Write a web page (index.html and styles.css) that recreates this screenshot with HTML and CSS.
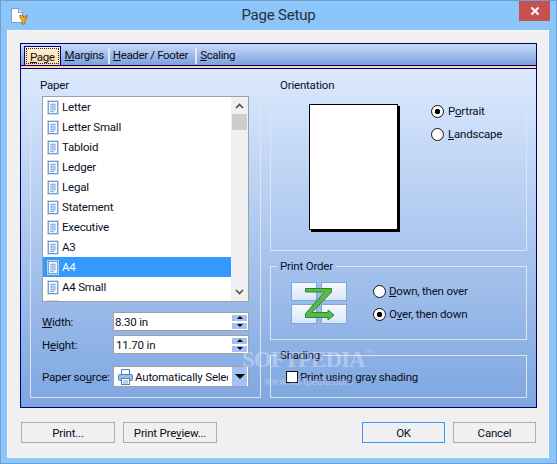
FILE: index.html
```html
<!DOCTYPE html>
<html lang="en">
<head>
  <meta charset="UTF-8" />
  <title>Page Setup</title>
  <link rel="stylesheet" href="styles.css">
</head>
<body>
<svg class="defs" width="0" height="0">
  <symbol id="doc" viewBox="0 0 13 16">
    <rect x="0.5" y="0.5" width="12" height="15" fill="#e6eefa" stroke="#cfd8e6"/>
    <rect x="1.5" y="1.5" width="10" height="13" fill="#fbfdff" stroke="#5f94d2"/>
    <path d="M3.5 4.5h6M3.5 6.5h6M3.5 8.5h6M3.5 10.5h6M3.5 12.5h4" stroke="#5f94d2" fill="none"/>
  </symbol>
</svg>
<div class="window">
  <header class="titlebar">
    <svg class="app-icon" width="18" height="18" viewBox="0 0 18 18">
      <path d="M1.5 1.5h7l4 4v10h-11z" fill="#fff" stroke="#6f9fd6"/>
      <path d="M8.5 1.5v4h4" fill="#dfeafa" stroke="#6f9fd6"/>
      <path d="M10 8v3l2 2v4h3v-4l2-2V8l-1.5 1v1.500h-2V9z" fill="#f2b01e" stroke="#a3620a" stroke-width="0.8"/>
    </svg>
    <h1 class="title">Page Setup</h1>
    <button class="close-btn">
      <svg width="10" height="10" viewBox="0 0 10 10"><path d="M1.500 1.500l7 7M8.500 1.500l-7 7" stroke="#fff" stroke-width="2"/></svg>
    </button>
  </header>

  <div class="client">
    <div class="tabs">
      <div class="tab-strip">
        <div class="tab active"><span class="focus"><u>P</u>age</span></div>
        <div class="tab margins-tab"><u>M</u>argins</div>
        <div class="tab-sep"></div>
        <div class="tab header-tab"><u>H</u>eader / Footer</div>
        <div class="tab-sep"></div>
        <div class="tab"><u>S</u>caling</div>
      </div>
      <div class="tab-line"></div>

      <div class="panel">
        <fieldset class="group paper-group">
          <legend>Paper</legend>
          <ul class="paper-list">
            <li><svg class="doc-icon"><use href="#doc"/></svg>Letter</li>
            <li><svg class="doc-icon"><use href="#doc"/></svg>Letter Small</li>
            <li><svg class="doc-icon"><use href="#doc"/></svg>Tabloid</li>
            <li><svg class="doc-icon"><use href="#doc"/></svg>Ledger</li>
            <li><svg class="doc-icon"><use href="#doc"/></svg>Legal</li>
            <li><svg class="doc-icon"><use href="#doc"/></svg>Statement</li>
            <li><svg class="doc-icon"><use href="#doc"/></svg>Executive</li>
            <li><svg class="doc-icon"><use href="#doc"/></svg>A3</li>
            <li class="selected"><svg class="doc-icon"><use href="#doc"/></svg>A4</li>
            <li><svg class="doc-icon"><use href="#doc"/></svg>A4 Small</li>
            <li class="clipped-row"><svg class="doc-icon"><use href="#doc"/></svg></li>
          </ul>
          <div class="scrollbar">
            <svg class="chevron" width="9" height="6" viewBox="0 0 9 6"><path d="M1 5l3.500-3.500L8 5" fill="none" stroke="#505050" stroke-width="1.600"/></svg>
            <div class="thumb"></div>
            <svg class="chevron chevron-down" width="9" height="6" viewBox="0 0 9 6"><path d="M1 1l3.500 3.500L8 1" fill="none" stroke="#505050" stroke-width="1.600"/></svg>
          </div>

          <div class="form-row first-row">
            <label><u>W</u>idth:</label>
            <div class="field">
              <span class="field-text">8.30 in</span>
              <div class="spin"><span class="up"></span><span class="down"></span></div>
            </div>
          </div>
          <div class="form-row">
            <label>H<u>e</u>ight:</label>
            <div class="field">
              <span class="field-text shifted">11.70 in</span>
              <div class="spin"><span class="up"></span><span class="down"></span></div>
            </div>
          </div>
          <div class="form-row source-row">
            <label>Paper so<u>u</u>rce:</label>
            <div class="field combo">
              <svg class="printer" width="15" height="16" viewBox="0 0 15 16">
                <path d="M3.500 6V.5h8V6" fill="#fff" stroke="#4f82bd"/>
                <rect x="0.500" y="5.500" width="14" height="6" rx="1" fill="#9dbce6" stroke="#4f82bd"/>
                <rect x="3.500" y="9.500" width="8" height="6" fill="#fff" stroke="#4f82bd"/>
                <path d="M5 12h5M5 14h5" stroke="#7fa3d4"/>
              </svg>
              <span class="combo-text">Automatically Select</span>
              <div class="combo-btn"><span></span></div>
            </div>
          </div>
        </fieldset>

        <div class="right-col">
          <fieldset class="group orientation-group">
            <legend>Orientation</legend>
            <div class="orientation-body">
              <div class="sheet"></div>
              <div class="radios">
                <label class="radio-row"><input type="radio" name="orient" checked><span>P<u>o</u>rtrait</span></label>
                <label class="radio-row"><input type="radio" name="orient"><span><u>L</u>andscape</span></label>
              </div>
            </div>
          </fieldset>

          <fieldset class="group order-group">
            <legend>Print Order</legend>
            <div class="order-body">
              <svg class="order-icon" width="56" height="44" viewBox="0 0 56 44">
                <defs>
                  <linearGradient id="tile" x1="0" y1="0" x2="0" y2="1">
                    <stop offset="0" stop-color="#f6f9ff"/>
                    <stop offset="1" stop-color="#d8e6f9"/>
                  </linearGradient>
                </defs>
                <rect x="0.500" y="1.500" width="25" height="18" fill="url(#tile)" stroke="#7da7da"/>
                <rect x="30.500" y="1.500" width="25" height="18" fill="url(#tile)" stroke="#7da7da"/>
                <rect x="0.500" y="23.500" width="25" height="19" fill="url(#tile)" stroke="#7da7da"/>
                <rect x="30.500" y="23.500" width="25" height="19" fill="url(#tile)" stroke="#7da7da"/>
                <path d="M14.500 7.500h26v3.500L21 31.500h16v-2.500l6 5-6 5v-2.500H14.500v-4L33.500 11H14.500z" fill="#58b84a" stroke="#2b8a2b"/>
              </svg>
              <div class="radios order-radios">
                <label class="radio-row"><input type="radio" name="order"><span><u>D</u>own, then over</span></label>
                <label class="radio-row"><input type="radio" name="order" checked><span>O<u>v</u>er, then down</span></label>
              </div>
            </div>
          </fieldset>

          <fieldset class="group shading-group">
            <legend>Shading</legend>
            <label class="check-row"><input type="checkbox"><span>Print using <u>g</u>ray shading</span></label>
          </fieldset>
        </div>
      </div>
    </div>

    <div class="buttons">
      <button class="btn">Print...</button>
      <button class="btn preview-btn">Print Pre<u>v</u>iew...</button>
      <button class="btn ok-btn default">OK</button>
      <button class="btn">Cancel</button>
    </div>
  </div>

  <div class="watermark">
    <span class="wm-name">SOFTPEDIA</span>
    <span class="wm-tm">TM</span>
    <span class="wm-url">www.softpedia.com</span>
  </div>
</div>
</body>
</html>
```

FILE: styles.css
```css
* {
  box-sizing: border-box;
}

body {
  margin: 0;
  font-family: Roboto, sans-serif;
  font-size: 11.5px;
  letter-spacing: -0.2px;
  color: #0a0f24;
}

.defs {
  position: absolute;
}

u {
  text-underline-offset: 1px;
}

.window {
  position: relative;
  width: 557px;
  height: 464px;
  background: #8bc5fa;
  border: 1px solid #6a9fd0;
  display: flex;
  flex-direction: column;
}

.titlebar {
  height: 29px;
  flex: none;
  display: grid;
  grid-template-columns: 1fr auto 1fr;
}

.app-icon {
  margin: 6px 0 0 9px;
}

.title {
  margin: 3px 0 0;
  font-size: 15px;
  font-weight: 400;
  line-height: 22px;
  color: #27313d;
}

.close-btn {
  justify-self: end;
  width: 31px;
  height: 20px;
  margin-right: 6px;
  padding: 0;
  border: none;
  background: #c75050;
  display: flex;
  align-items: center;
  justify-content: center;
}

.client {
  flex: 1;
  margin: 0 7px 6px 6px;
  padding: 12px 11px 14px 12px;
  background: #f0f0f0;
  border: 1px solid #f7f7f7;
  display: flex;
  flex-direction: column;
}

.tabs {
  border: 1px solid #00007f;
  flex: 1;
  display: flex;
  flex-direction: column;
  min-height: 0;
}

.tab-strip {
  height: 22px;
  flex: none;
  padding: 2px 0 0 3px;
  background: linear-gradient(#c9dcf8, #7c9fdc);
  border-bottom: 1px solid #00007f;
  display: flex;
  align-items: stretch;
  letter-spacing: -0.35px;
}

.tab {
  padding: 0 4px 0 3px;
  line-height: 19px;
  white-space: nowrap;
}

.margins-tab {
  padding-right: 2px;
}

.header-tab {
  padding-right: 5px;
}

.tab.active {
  padding: 1px;
  margin-right: 1px;
  border: 1px solid #00007f;
  border-bottom: none;
  background: linear-gradient(#fff1d4, #ffd9a0);
}

.focus {
  display: block;
  height: 100%;
  padding: 0 3px;
  line-height: 16px;
  border: 1px dotted #222;
}

.tab-sep {
  width: 2px;
  margin: 2px 0 1px 2px;
  background: #dfe9fa;
}

.tab-line {
  height: 3px;
  flex: none;
  background: #ffd5ac;
  border-bottom: 1px solid #00007f;
}

.panel {
  flex: 1;
  padding: 9px;
  background: linear-gradient(#dbe9fe, #7ea6e0);
  display: grid;
  grid-template-columns: 231px 257px;
  column-gap: 9px;
  min-height: 0;
}

.group {
  margin: 0;
  min-width: 0;
  padding: 0;
  border: 1px solid #dfe5f0;
}

.group legend {
  margin-left: 6px;
  padding: 0 3px;
  line-height: 14px;
}

.paper-group {
  position: relative;
  padding: 4px 0 0 11px;
  height: 320px;
}

.paper-group legend {
  margin-left: -5px;
}

.paper-list {
  margin: 0;
  padding: 0;
  list-style: none;
  width: 207px;
  height: 206px;
  overflow: hidden;
  background: #fff;
  border: 1px solid #a0a0a0;
}

.paper-list li {
  width: 188px;
  height: 20px;
  padding-left: 4px;
  display: flex;
  align-items: center;
  gap: 3px;
}

.paper-list li.selected {
  background: #3399ff;
  color: #fff;
}

.doc-icon {
  width: 12px;
  height: 15px;
  flex: none;
}

/* sits over the right end of the list */
.scrollbar {
  position: absolute;
  top: 5px;
  right: 12px;
  width: 17px;
  height: 204px;
  background: #f0f0f0;
  display: flex;
  flex-direction: column;
  align-items: center;
}

.chevron {
  flex: none;
  margin-top: 6px;
}

.thumb {
  width: 15px;
  height: 16px;
  margin-top: 5px;
  background: #cdcdcd;
}

.chevron-down {
  margin-top: auto;
  margin-bottom: 6px;
}

.form-row {
  display: grid;
  grid-template-columns: 71px 136px;
  align-items: center;
  margin-top: 4px;
}

.first-row {
  margin-top: 10px;
}

.source-row {
  margin-top: 12px;
}

.field {
  height: 19px;
  background: #fff;
  border: 1px solid #a0a0a0;
  display: flex;
  align-items: center;
  justify-content: space-between;
  padding: 0 1px 0 1px;
}

.shifted {
  padding-left: 1px;
}

.spin {
  width: 15px;
  display: flex;
  flex-direction: column;
  gap: 2px;
}

.spin span {
  height: 6px;
  background: #a4c0f4;
  display: flex;
  align-items: center;
  justify-content: center;
}

.spin span::after {
  content: "";
  border-left: 3px solid transparent;
  border-right: 3px solid transparent;
}

.spin .up::after {
  border-bottom: 3px solid #000;
}

.spin .down::after {
  border-top: 3px solid #000;
}

.combo {
  height: 21px;
  padding: 0 1px 0 4px;
  justify-content: flex-start;
  gap: 2px;
}

.printer {
  flex: none;
}

.combo-text {
  width: 93px;
  overflow: hidden;
  white-space: nowrap;
}

.combo-btn {
  width: 15px;
  height: 100%;
  margin-left: auto;
  background: #a4c0f4;
  display: flex;
  align-items: center;
  justify-content: center;
}

.combo-btn span {
  border-left: 5px solid transparent;
  border-right: 5px solid transparent;
  border-top: 5px solid #000;
}

.right-col {
  display: flex;
  flex-direction: column;
  gap: 8px;
}

.orientation-group {
  height: 173px;
}

.orientation-body {
  display: flex;
  align-items: flex-start;
  padding: 12px 0 0 38px;
}

.sheet {
  width: 89px;
  height: 126px;
  background: #fff;
  border: 1px solid #000;
  box-shadow: 2px 2px 0 #000;
}

.radios {
  margin: 0 0 0 33px;
  display: flex;
  flex-direction: column;
  gap: 9px;
}

.radio-row {
  display: flex;
  align-items: center;
  gap: 4px;
  height: 14px;
  white-space: nowrap;
}

.radio-row input {
  appearance: none;
  width: 13px;
  height: 13px;
  margin: 0;
  flex: none;
  border: 1px solid #111;
  border-radius: 50%;
  background: #fff;
}

.radio-row input:checked {
  background: radial-gradient(circle, #000 0, #000 2.500px, #fff 3px);
}

.order-group {
  height: 81px;
}

.order-body {
  display: flex;
  align-items: flex-start;
  padding: 0 0 0 20px;
  margin-top: 8px;
}

.order-radios {
  margin: 3px 0 0 26px;
}

.order-radios .radio-row {
  gap: 3px;
}

.shading-group {
  height: 50px;
}

.check-row {
  display: flex;
  align-items: center;
  gap: 2px;
  height: 14px;
  margin: 8px 0 0 15px;
}

.check-row input {
  appearance: none;
  width: 12px;
  height: 12px;
  margin: 0;
  background: #fff;
  border: 1px solid #111;
}

.buttons {
  flex: none;
  margin-top: 14px;
  display: flex;
  padding: 0 1px;
}

.btn {
  width: 83px;
  height: 21px;
  padding: 0;
  font: inherit;
  letter-spacing: inherit;
  color: #0a0f24;
  background: #f0f0f0;
  border: 1px solid #acacac;
  margin-left: 8px;
}

.btn:first-child,
.preview-btn {
  width: 94px;
}

.btn:first-child {
  margin-left: 0;
}

.ok-btn {
  margin-left: auto;
}

.default {
  border-color: #3399ff;
}

.watermark {
  position: absolute;
  left: 241px;
  top: 346px;
  width: 125px;
  height: 46px;
  color: rgba(255, 255, 255, 0.32);
  letter-spacing: 0;
  pointer-events: none;
}

.wm-name {
  display: block;
  font-family: "Liberation Serif", serif;
  font-weight: 700;
  font-size: 23px;
  line-height: 25px;
  letter-spacing: -1px;
  white-space: nowrap;
}

.wm-tm {
  position: absolute;
  right: -6px;
  top: 0;
  font-size: 6px;
}

.wm-url {
  display: block;
  margin: 4px 0 0 22px;
  font-size: 10px;
  line-height: 12px;
  white-space: nowrap;
}
```
